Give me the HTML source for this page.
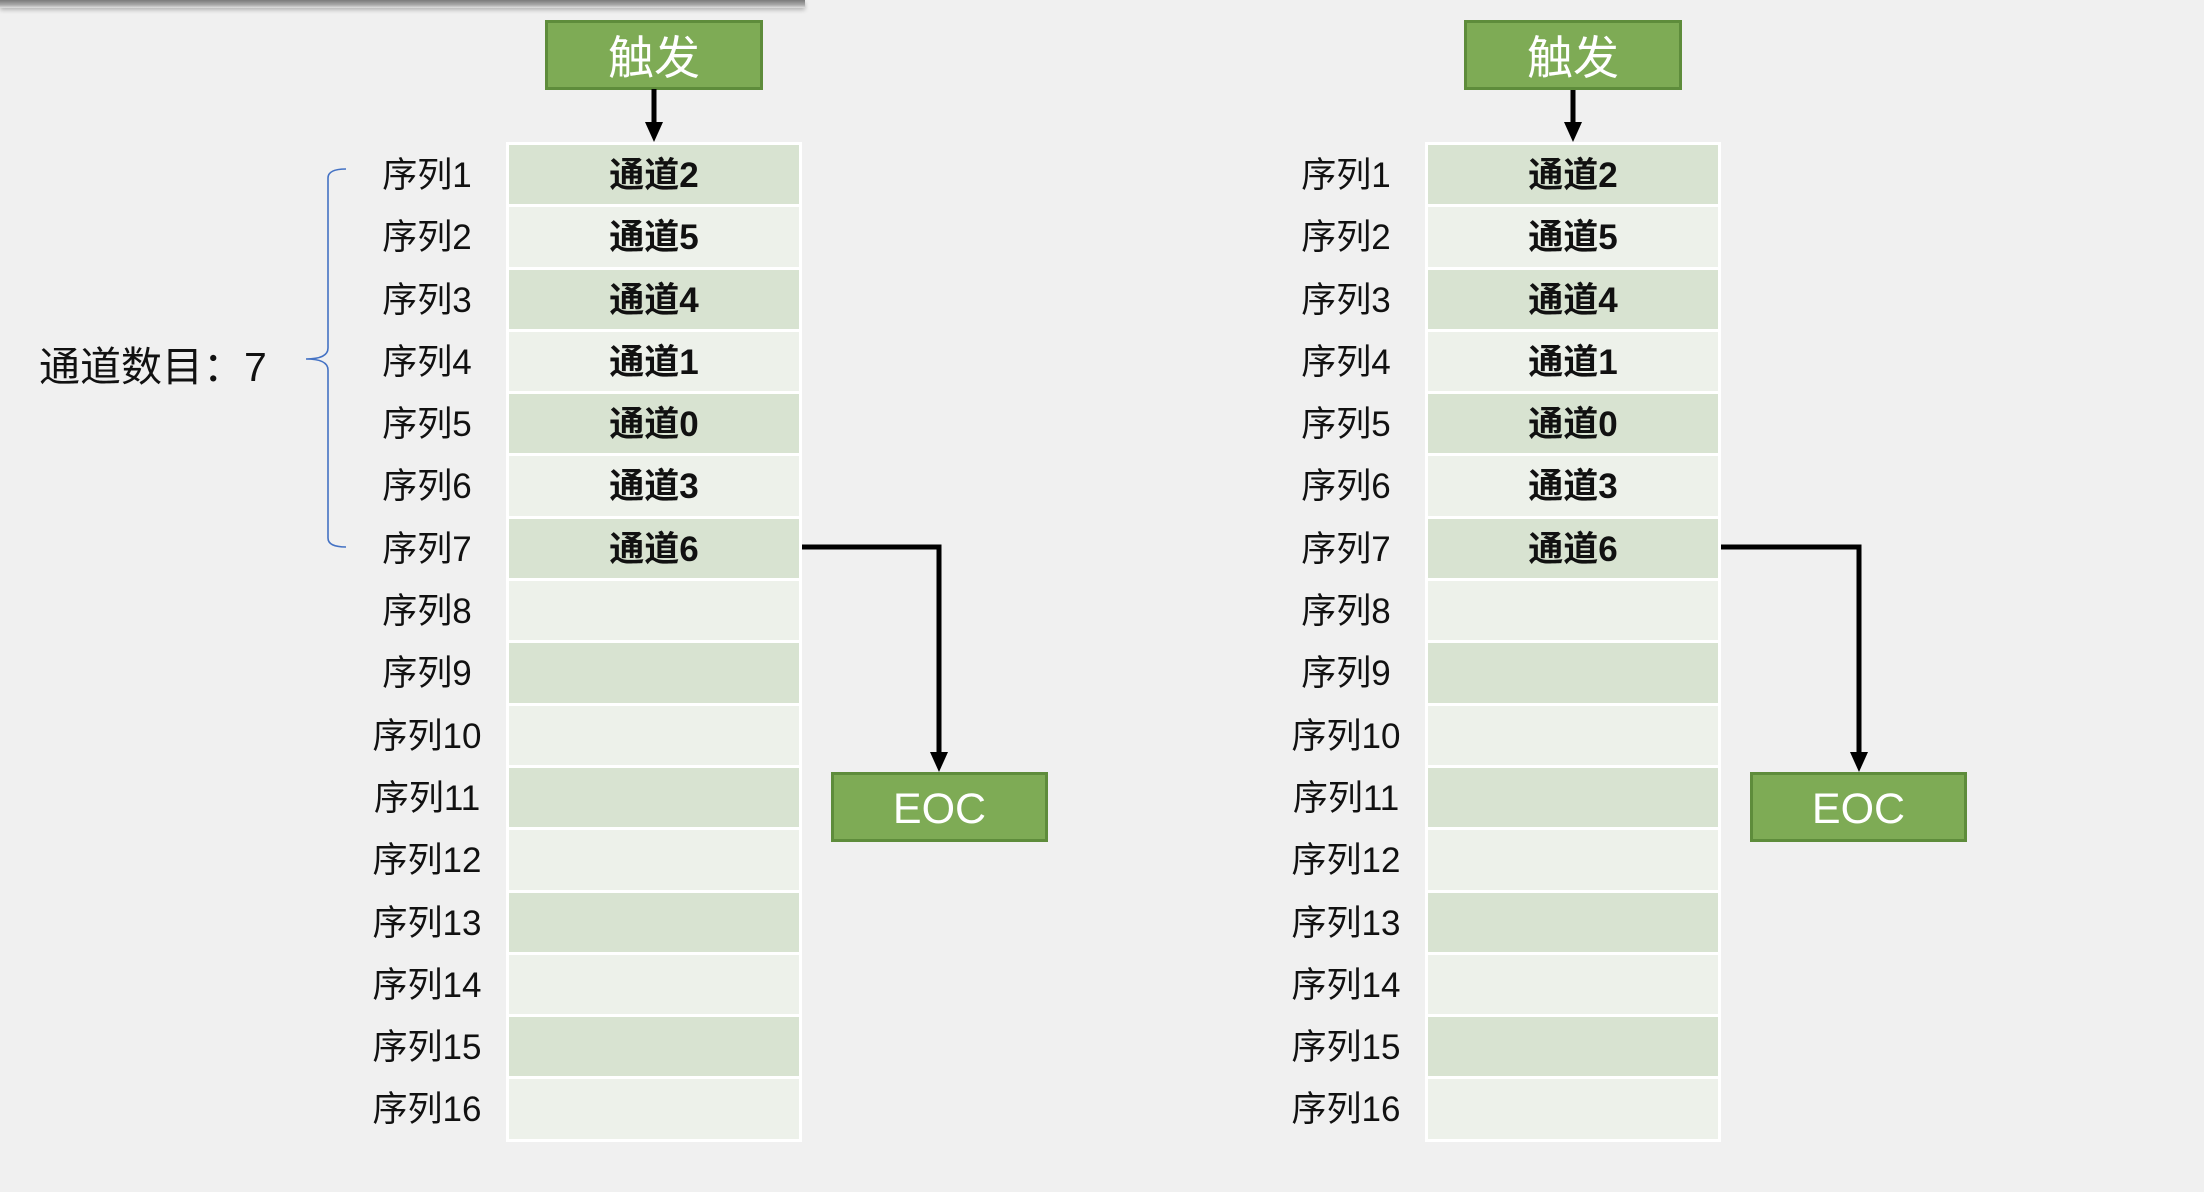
<!DOCTYPE html>
<html><head><meta charset="utf-8"><style>
html,body{margin:0;padding:0;width:2204px;height:1192px;overflow:hidden;background:#f0f0f0;font-family:"Liberation Sans","Noto Sans CJK SC",sans-serif;}
.abs{position:absolute}
.shadow{left:0;top:0;width:805px;height:8px;background:linear-gradient(#7a7a7a,#a8a8a8 60%,#e0e0e0);box-shadow:0 2px 4px rgba(0,0,0,.25)}
.box{background:#7eab55;border:3px solid #5e8c3b;box-sizing:border-box;color:#fff;text-align:center;}
.trig{width:218px;height:70px;font-size:46px;line-height:70px}
.eoc{width:217px;height:70px;font-size:43px;line-height:68px}
.tbl{width:296px;background:#fff;padding:3px;box-sizing:border-box;}
.row{height:62.3px;box-sizing:border-box;border-bottom:3px solid #fff;font-weight:bold;font-size:35px;text-align:center;line-height:62px;color:#111}
.row:last-child{border-bottom:none;height:59.3px}
.d{background:#d8e3d1}.l{background:#edf1ea}
.lab{width:150px;font-size:35px;text-align:center;color:#111;line-height:62.3px}
</style></head><body>
<div class="abs shadow"></div>

<div class="abs box trig" style="left:545px;top:20px">触发</div>
<svg class="abs" style="left:0;top:0" width="2204" height="1192">
<g fill="none" stroke="#000" stroke-width="5">
<line x1="654" y1="89" x2="654" y2="125"/>
<polyline points="801,547 939,547 939,755"/>
<line x1="1573" y1="89" x2="1573" y2="125"/>
<polyline points="1721,547 1859,547 1859,755"/>
</g>
<g fill="#000">
<polygon points="645,122 663,122 654,142"/>
<polygon points="930,752 948,752 939,772"/>
<polygon points="1564,122 1582,122 1573,142"/>
<polygon points="1850,752 1868,752 1859,772"/>
</g>
<path d="M346,169 Q328,169 328,178 L328,348 Q328,359 306,359 Q328,359 328,370 L328,538 Q328,547 346,547" fill="none" stroke="#4472c4" stroke-width="1.6"/>
</svg>
<div class="abs" style="left:39px;top:333px;font-size:41px;color:#111">通道数目：7</div>

<div class="abs tbl" style="left:506px;top:142px">
<div class="row d">通道2</div><div class="row l">通道5</div><div class="row d">通道4</div><div class="row l">通道1</div>
<div class="row d">通道0</div><div class="row l">通道3</div><div class="row d">通道6</div><div class="row l"></div>
<div class="row d"></div><div class="row l"></div><div class="row d"></div><div class="row l"></div>
<div class="row d"></div><div class="row l"></div><div class="row d"></div><div class="row l"></div>
</div>
<div class="abs lab" style="left:352px;top:145px">
<div>序列1</div><div>序列2</div><div>序列3</div><div>序列4</div><div>序列5</div><div>序列6</div><div>序列7</div><div>序列8</div><div>序列9</div><div>序列10</div><div>序列11</div><div>序列12</div><div>序列13</div><div>序列14</div><div>序列15</div><div>序列16</div>
</div>
<div class="abs box eoc" style="left:831px;top:772px">EOC</div>

<div class="abs box trig" style="left:1464px;top:20px">触发</div>
<div class="abs tbl" style="left:1425px;top:142px">
<div class="row d">通道2</div><div class="row l">通道5</div><div class="row d">通道4</div><div class="row l">通道1</div>
<div class="row d">通道0</div><div class="row l">通道3</div><div class="row d">通道6</div><div class="row l"></div>
<div class="row d"></div><div class="row l"></div><div class="row d"></div><div class="row l"></div>
<div class="row d"></div><div class="row l"></div><div class="row d"></div><div class="row l"></div>
</div>
<div class="abs lab" style="left:1271px;top:145px">
<div>序列1</div><div>序列2</div><div>序列3</div><div>序列4</div><div>序列5</div><div>序列6</div><div>序列7</div><div>序列8</div><div>序列9</div><div>序列10</div><div>序列11</div><div>序列12</div><div>序列13</div><div>序列14</div><div>序列15</div><div>序列16</div>
</div>
<div class="abs box eoc" style="left:1750px;top:772px">EOC</div>
</body></html>
